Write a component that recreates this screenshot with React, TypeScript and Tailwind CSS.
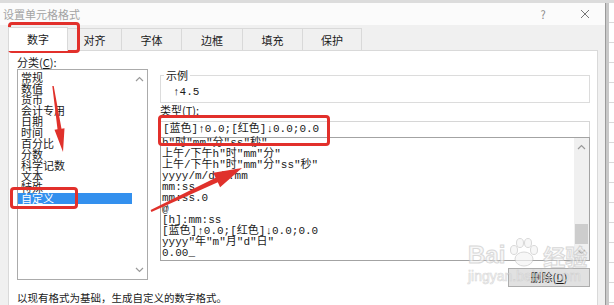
import React from 'react'

const categories = ['常规', '数值', '货币', '会计专用', '日期', '时间', '百分比', '分数', '科学记数', '文本', '特殊', '自定义']

const formats = [
  'h"时"mm"分"ss"秒"',
  '上午/下午h"时"mm"分"',
  '上午/下午h"时"mm"分"ss"秒"',
  'yyyy/m/d h:mm',
  'mm:ss',
  'mm:ss.0',
  '@',
  '[h]:mm:ss',
  '[蓝色]↑0.0;[红色]↓0.0;0.0',
  'yyyy"年"m"月"d"日"',
  '0.00_',
]

const tabs = [
  { label: '对齐', w: 'w-[54px]' },
  { label: '字体', w: 'w-[60px]' },
  { label: '边框', w: 'w-[61px]' },
  { label: '填充', w: 'w-[60px]' },
  { label: '保护', w: 'w-[59px]' },
]

const Chevron: React.FC<{ up?: boolean }> = ({ up }) => (
  <svg width="9" height="6" viewBox="0 0 9 6">
    <polyline
      points={up ? '1,5 4.5,1.5 8,5' : '1,1 4.5,4.5 8,1'}
      fill="none"
      stroke="#9a9a9a"
      strokeWidth="1.2"
    />
  </svg>
)

const App: React.FC = () => {
  return (
    <div className="relative w-[614px] h-[305px] overflow-hidden bg-white flex flex-col font-['Noto_Sans_CJK_SC',sans-serif] text-[#1a1a1a]">
      {/* sheet behind the dialog */}
      <div className="h-[3px] shrink-0 bg-[#dcdcdc]" />
      <div className="flex flex-1 min-h-0">
        {/* Dialog */}
        <div className="w-[606px] shrink-0 flex flex-col bg-[#f0f0f0] border-r border-[#9a9a9a]">
          {/* Title bar */}
          <div className="h-[22px] shrink-0 bg-[#fbfbfb] flex items-center pl-[3px] pr-[5px]">
            <span className="text-[11px] text-[#a3a3a3]">设置单元格格式</span>
            <div className="ml-auto flex items-center gap-[12px]">
              <span className="w-[30px] text-center text-[11px] text-[#8a8a8a]">?</span>
              <span className="w-[30px] flex justify-center">
                <svg width="10" height="10" viewBox="0 0 10 10">
                  <path d="M1 1 L9 9 M9 1 L1 9" stroke="#777" strokeWidth="1" />
                </svg>
              </span>
            </div>
          </div>

          {/* Tabs */}
          <div className="h-[25px] shrink-0 flex items-end pl-[8px] text-[11px]">
            <div className="relative z-10 -mb-px w-[60px] h-[24px] bg-white border border-b-0 border-[#d9d9d9] flex items-center justify-center">
              数字
            </div>
            {tabs.map((t) => (
              <div
                key={t.label}
                className={`${t.w} h-[22px] border-t border-r border-[#d9d9d9] flex items-center justify-center pt-[2px]`}
              >
                {t.label}
              </div>
            ))}
          </div>

          {/* Tab page */}
          <div className="ml-[8px] w-[590px] flex-1 bg-white border border-[#d9d9d9] pl-[8px] pr-[7px] flex flex-col">
            <div className="flex gap-[12px]">
              {/* Category */}
              <div className="w-[131px] pt-[4px]">
                <div className="h-[14px] leading-[14px] text-[11px]">
                  分类(<span className="underline">C</span>):
                </div>
                <div className="h-[211px] border border-[#ababab] flex">
                  <div className="w-[114px] pt-[2px] text-[11px] leading-[11px]">
                    {categories.map((c) => (
                      <div
                        key={c}
                        className={
                          c === '自定义'
                            ? 'h-[11px] pl-[3px] bg-[#3390ee] text-white'
                            : 'h-[11px] pl-[3px]'
                        }
                      >
                        {c}
                      </div>
                    ))}
                  </div>
                  <div className="flex-1 flex flex-col items-center justify-between py-[6px]">
                    <Chevron up />
                    <Chevron />
                  </div>
                </div>
              </div>

              {/* Type */}
              <div className="w-[430px] flex flex-col">
                <fieldset className="mt-[17px] h-[35px] border border-[#dcdcdc] pl-[12px] pb-[2px]">
                  <legend className="ml-[-9px] px-[2px] text-[11px] leading-[14px]">示例</legend>
                  <div className="pt-[3px] leading-[14px] text-[11px] font-['Liberation_Mono','Noto_Sans_CJK_SC',monospace]">
                    ↑4.5
                  </div>
                </fieldset>
                <div className="h-[14px] leading-[14px] text-[11px]">
                  类型(<span className="underline">T</span>):
                </div>
                <div className="mt-[4px] h-[16px] border-t border-x border-[#d6d6d6] pl-[2px] text-[11px] leading-[14px] font-['Liberation_Mono','Noto_Sans_CJK_SC',monospace]">
                  [蓝色]↑0.0;[红色]↓0.0;0.0
                </div>
                <div className="h-[124px] border border-[#a3a3a3] flex">
                  <div className="flex-1 pl-[1px] text-[11px] leading-[11px] font-['Liberation_Mono','Noto_Sans_CJK_SC',monospace]">
                    {formats.map((f) => (
                      <div key={f} className="h-[11px] whitespace-pre">
                        {f}
                      </div>
                    ))}
                  </div>
                  <div className="w-[15px] bg-[#f0f0f0] flex flex-col">
                    <div className="h-[17px] flex items-center justify-center">
                      <Chevron up />
                    </div>
                    <div className="flex-1" />
                    <div className="h-[20px] mx-[1px] bg-[#cdcdcd]" />
                    <div className="h-[16px] flex items-center justify-center">
                      <Chevron />
                    </div>
                  </div>
                </div>
                <button className="mt-[7px] self-end w-[82px] h-[19px] bg-[#e1e1e1] border border-[#adadad] text-[11px] leading-[17px]">
                  删除(<span className="underline">D</span>)
                </button>
              </div>
            </div>
            <div className="mt-[4px] text-[10.5px] leading-[14px] whitespace-nowrap">
              以现有格式为基础，生成自定义的数字格式。
            </div>
          </div>
        </div>

        {/* Sheet grid to the right */}
        <div className="flex-1 bg-[repeating-linear-gradient(to_bottom,#ffffff_0px,#ffffff_19px,#d9d9d9_19px,#d9d9d9_20px)] border-l-[3px] border-[#c8c8c8]" />
      </div>

      {/* Watermark */}
      <div className="absolute left-[468px] top-[238px] flex flex-col items-start opacity-70 pointer-events-none">
        <div className="flex items-end gap-[2px] text-[#f4f4f4] [-webkit-text-stroke:1px_#c9c9c9]">
          <span className="text-[24px] leading-[26px] font-bold font-['Liberation_Sans',sans-serif]">Bai</span>
          <svg width="34" height="30" viewBox="0 0 34 30">
            <g fill="#f4f4f4" stroke="#c9c9c9" strokeWidth="1">
              <ellipse cx="17" cy="21" rx="9" ry="7" />
              <ellipse cx="7" cy="12" rx="3.5" ry="4.5" />
              <ellipse cx="13" cy="5" rx="3.5" ry="4.5" />
              <ellipse cx="21" cy="5" rx="3.5" ry="4.5" />
              <ellipse cx="27" cy="12" rx="3.5" ry="4.5" />
            </g>
          </svg>
          <span className="text-[22px] leading-[26px] font-bold">经验</span>
        </div>
        <div className="text-[14px] leading-[16px] text-[#f4f4f4] [-webkit-text-stroke:0.6px_#c9c9c9] font-['Liberation_Sans',sans-serif]">
          jingyan.baidu.com
        </div>
      </div>

      {/* Red annotations */}
      <div className="absolute left-[8px] top-[22px] w-[72px] h-[31px] border-[3px] border-[#e2302b] rounded-[4px]" />
      <div className="absolute left-[10px] top-[187px] w-[68px] h-[22px] border-[3px] border-[#e2302b] rounded-[4px]" />
      <div className="absolute left-[158px] top-[115px] w-[172px] h-[31px] border-[3px] border-[#e2302b] rounded-[4px]" />
      <svg className="absolute left-0 top-0 pointer-events-none" width="614" height="305">
        <polygon
          points="52.3,86.1 53.7,85.9 61.5,128.7 64.5,128.2 63,152 54.5,129.8 57.5,129.3"
          fill="#e0312b"
        />
        <polygon
          points="150.6,210.1 215.6,177.7 213.3,172.8 242,168 220.1,187.2 217.8,182.3 151.4,211.9"
          fill="#e0312b"
        />
      </svg>
    </div>
  )
}

export default App
